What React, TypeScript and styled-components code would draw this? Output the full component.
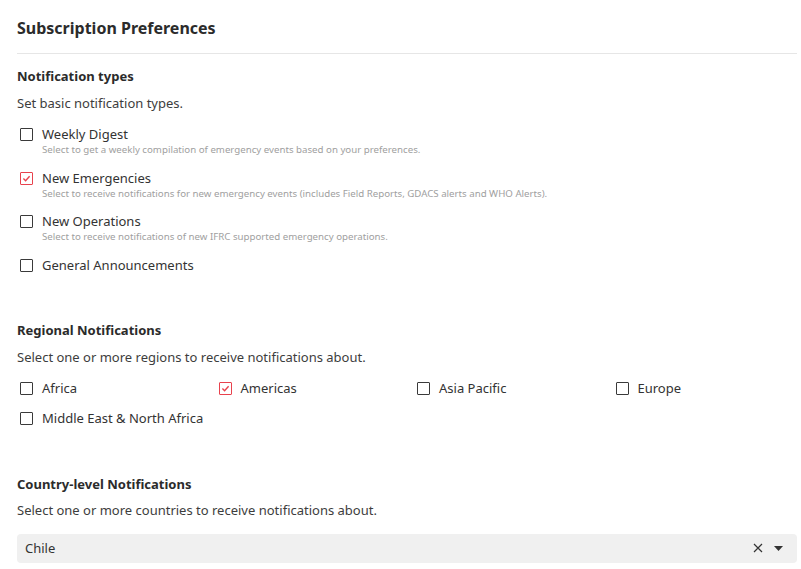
import React from "react";
import styled, { createGlobalStyle } from "styled-components";

const GlobalStyle = createGlobalStyle`
  body {
    margin: 0;
    background: #fff;
    font-family: "Noto Sans", "Open Sans", sans-serif;
    color: #313131;
  }
`;

interface IOption {
  key: string;
  label: string;
  description?: string;
  checked?: boolean;
}

const notificationTypes: IOption[] = [
  {
    key: "weekly",
    label: "Weekly Digest",
    description:
      "Select to get a weekly compilation of emergency events based on your preferences.",
  },
  {
    key: "emergencies",
    label: "New Emergencies",
    description:
      "Select to receive notifications for new emergency events (includes Field Reports, GDACS alerts and WHO Alerts).",
    checked: true,
  },
  {
    key: "operations",
    label: "New Operations",
    description:
      "Select to receive notifications of new IFRC supported emergency operations.",
  },
  { key: "general", label: "General Announcements" },
];

const regions: IOption[] = [
  { key: "africa", label: "Africa" },
  { key: "americas", label: "Americas", checked: true },
  { key: "asia", label: "Asia Pacific" },
  { key: "europe", label: "Europe" },
  { key: "mena", label: "Middle East & North Africa" },
];

const Page = styled.div`
  padding: 0 4px 0 17px;
`;

const Header = styled.div`
  padding: 18px 0 15px;
  border-bottom: 1px solid #e6e6e6;
`;

const Title = styled.h1`
  margin: 0;
  font-size: 16px;
  line-height: 20px;
  font-weight: 700;
  color: #2b2b2b;
`;

const Section = styled.section<{ $first?: boolean }>`
  display: flex;
  flex-direction: column;
  margin-top: ${(p) => (p.$first ? "13px" : "47.5px")};
`;

const Heading = styled.h2`
  margin: 0;
  font-size: 13px;
  line-height: 18px;
  font-weight: 700;
  color: #2b2b2b;
`;

const Description = styled.p`
  margin: 8.5px 0 13.5px;
  font-size: 13px;
  line-height: 18px;
  color: #3d3d3d;
`;

const OptionList = styled.div`
  display: flex;
  flex-direction: column;
  gap: 12.5px;
`;

const RegionGrid = styled.div`
  display: grid;
  grid-template-columns: repeat(4, minmax(0, 1fr));
  column-gap: 14px;
  row-gap: 12px;
`;

const Option = styled.label`
  display: flex;
  align-items: flex-start;
  gap: 9px;
  padding-left: 3px;
  white-space: nowrap;
  cursor: pointer;
`;

const Box = styled.span<{ $checked?: boolean }>`
  flex: none;
  box-sizing: border-box;
  width: 13px;
  height: 13px;
  margin-top: 3px;
  border: 1.8px solid ${(p) => (p.$checked ? "#e8424d" : "#3a3a3a")};
  border-radius: 1px;
  display: flex;
  align-items: center;
  justify-content: center;
`;

const OptionText = styled.div`
  display: flex;
  flex-direction: column;
`;

const OptionLabel = styled.span`
  font-size: 13px;
  line-height: 18px;
  color: #333;
`;

const OptionDescription = styled.span`
  margin-top: 1px;
  font-size: 9.7px;
  line-height: 12px;
  color: #a0a0a0;
`;

const Select = styled.div`
  height: 29px;
  margin-top: 1px;
  box-sizing: border-box;
  background: #f0f0f0;
  border-radius: 4px;
  padding: 0 14px 0 8px;
  display: flex;
  align-items: center;
`;

const SelectValue = styled.span`
  flex: 1;
  font-size: 13px;
  color: #333;
`;

const SelectActions = styled.div`
  display: flex;
  align-items: center;
  gap: 11px;
`;

const Check = () => (
  <svg width="9" height="9" viewBox="0 0 9 9">
    <path
      d="M1.4 4.6 L3.6 6.7 L7.6 2.2"
      fill="none"
      stroke="#e8424d"
      strokeWidth="1.4"
    />
  </svg>
);

const CheckOption: React.FC<{ option: IOption }> = ({ option }) => (
  <Option>
    <Box $checked={option.checked}>{option.checked && <Check />}</Box>
    <OptionText>
      <OptionLabel>{option.label}</OptionLabel>
      {option.description && (
        <OptionDescription>{option.description}</OptionDescription>
      )}
    </OptionText>
  </Option>
);

const App: React.FC = () => {
  return (
    <>
      <GlobalStyle />
      <Page>
        <Header>
          <Title>Subscription Preferences</Title>
        </Header>

        <Section $first>
          <Heading>Notification types</Heading>
          <Description>Set basic notification types.</Description>
          <OptionList>
            {notificationTypes.map((o) => (
              <CheckOption key={o.key} option={o} />
            ))}
          </OptionList>
        </Section>

        <Section>
          <Heading>Regional Notifications</Heading>
          <Description>
            Select one or more regions to receive notifications about.
          </Description>
          <RegionGrid>
            {regions.map((o) => (
              <CheckOption key={o.key} option={o} />
            ))}
          </RegionGrid>
        </Section>

        <Section>
          <Heading>Country-level Notifications</Heading>
          <Description>
            Select one or more countries to receive notifications about.
          </Description>
          <Select>
            <SelectValue>Chile</SelectValue>
            <SelectActions>
              <svg width="10" height="10" viewBox="0 0 10 10">
                <path
                  d="M1 1 L9 9 M9 1 L1 9"
                  stroke="#333"
                  strokeWidth="1.2"
                  fill="none"
                />
              </svg>
              <svg width="9" height="5" viewBox="0 0 9 5">
                <path d="M0 0 H9 L4.5 5 Z" fill="#333" />
              </svg>
            </SelectActions>
          </Select>
        </Section>
      </Page>
    </>
  );
};

export default App;
